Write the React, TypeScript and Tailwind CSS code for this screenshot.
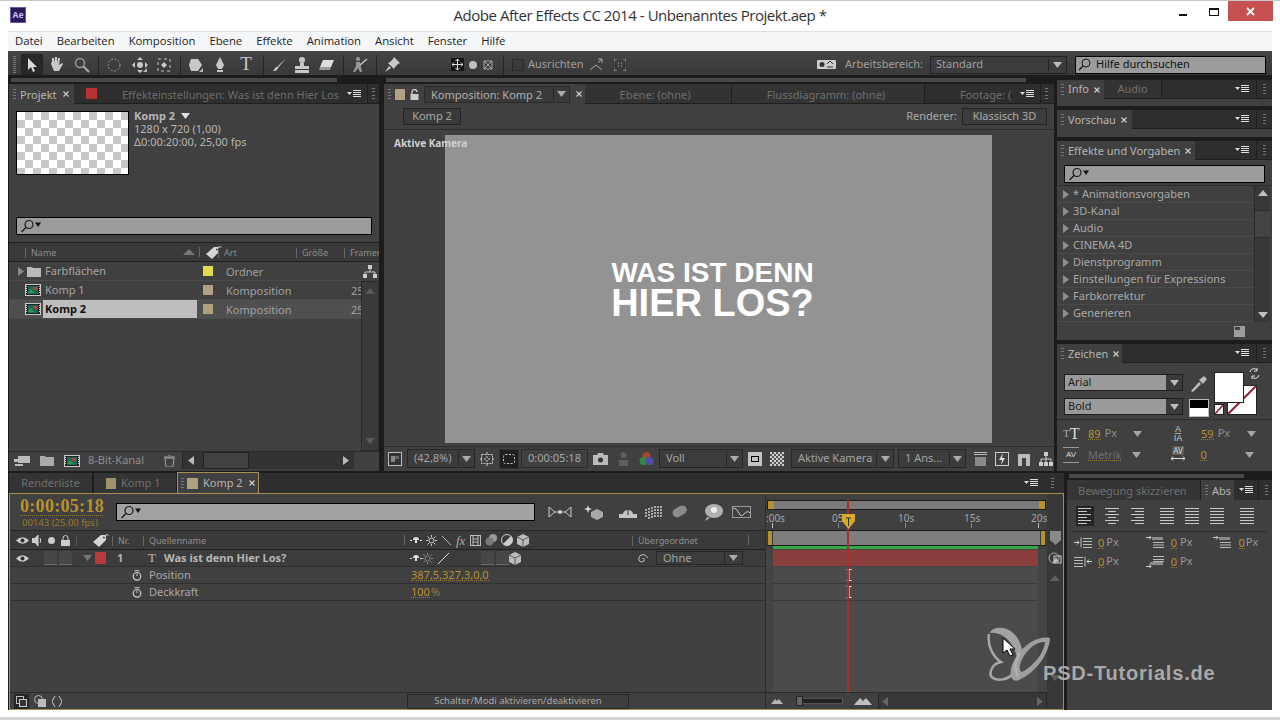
import React from "react";

type P = { children?: React.ReactNode; className?: string };

const Svg = ({ w = 16, h = 16, children, className = "" }: { w?: number; h?: number; children: React.ReactNode; className?: string }) => (
  <svg width={w} height={h} viewBox={`0 0 ${w} ${h}`} className={"shrink-0 " + className} fill="none">{children}</svg>
);

const Grip = ({ className = "" }: P) => (
  <div className={"w-[3px] h-[11px] shrink-0 flex flex-col justify-between " + className}>
    {[0, 1, 2, 3].map((i) => <div key={i} className="h-px bg-[#777]" />)}
  </div>
);

const PanelMenu = ({ className = "" }: P) => (
  <Svg w={15} h={8} className={className}>
    <path d="M0 2h5L2.5 5z" fill="#ddd" />
    <path d="M6 .5h8M6 2.5h8M6 4.5h8M6 6.5h8" stroke="#ddd" />
  </Svg>
);

const Close = ({ className = "" }: P) => (
  <Svg w={8} h={8} className={className}><path d="M1.5 1.5l5 5M6.5 1.5l-5 5" stroke="#cfcfcf" strokeWidth="1.1" /></Svg>
);

const Tri = ({ c = "#bdbdbd", className = "" }: { c?: string; className?: string }) => (
  <Svg w={9} h={6} className={className}><path d="M0 0h9L4.5 6z" fill={c} /></Svg>
);

const TriR = ({ c = "#8a8a8a", className = "" }: { c?: string; className?: string }) => (
  <Svg w={6} h={9} className={className}><path d="M0 0l6 4.5L0 9z" fill={c} /></Svg>
);

const Lens = () => (
  <Svg w={21} h={14} className="ml-[3px]">
    <circle cx="9" cy="5.5" r="4" stroke="#1c1c1c" strokeWidth="1.2" />
    <path d="M6 8.5L1.5 13" stroke="#1c1c1c" strokeWidth="1.4" />
    <path d="M15 3.5h6l-3 4.5z" fill="#111" />
  </Svg>
);

const Search = ({ className = "" }: P) => (
  <div className={"bg-[#9b9b9b] border border-black flex items-center " + className}><Lens /></div>
);

const Strip = ({ className = "" }: P) => (
  <div className="h-[8px] shrink-0 bg-[#1c1c1c] flex items-center pl-[2px]">
    <div className={"h-[4px] bg-[#484848] " + className} />
  </div>
);

const Sep = () => <div className="w-px h-[20px] bg-[#262626] shrink-0" />;
const Slot = ({ children, className = "" }: P) => <div className={"flex justify-center items-center shrink-0 " + className}>{children}</div>;
const Corner = () => <path d="M11 15h4v-4z" fill="#bbb" />;

const Drop = ({ label, className = "", btn = "w-[16px]" }: { label: string; className?: string; btn?: string }) => (
  <div className={"h-[19px] bg-[#3c3c3c] border border-[#272727] flex items-center shrink-0 " + className}>
    <span className="flex-1 pl-[6px] text-[#a3a3a3] whitespace-nowrap overflow-hidden">{label}</span>
    <div className={"h-[14px] border-l border-[#262626] flex items-center justify-center shrink-0 " + btn}><Tri c="#aaa" /></div>
  </div>
);

const FilmIcon = () => (
  <Svg w={16} h={12}>
    <rect x=".5" y=".5" width="15" height="11" fill="#222" stroke="#c8c8c8" />
    <rect x="3" y="2" width="10" height="8" fill="#1e6a5a" />
    <rect x="8" y="3" width="4" height="3" fill="#a04a30" />
    <path d="M3 9l3-4 3 4z" fill="#2f9a4e" />
    <path d="M1.5 2v8M14.5 2v8" stroke="#ddd" strokeDasharray="1 1" />
  </Svg>
);

const Folder = ({ c = "#b9b9b9" }: { c?: string }) => (
  <Svg w={14} h={11}><path d="M0 2V1h5l1 1h8v9H0z" fill={c} /></Svg>
);

const Tag = () => (
  <Svg w={17} h={15}>
    <path d="M1 9L9 2h5v5l-7 7z" fill="#d6d6d6" />
    <circle cx="12" cy="4.5" r="1" fill="#333" />
    <path d="M12 4C14 1 16 1 16 3" stroke="#d6d6d6" />
  </Svg>
);

const ColHead = ({ children, className = "" }: P) => (
  <div className={"flex items-center h-full shrink-0 whitespace-nowrap overflow-hidden " + className}>
    <div className="w-px h-[10px] bg-[#666] mr-[5px] shrink-0" />
    {children}
  </div>
);

const ProjRow = ({ icon, name, swatch, type, fr, sel }: { icon: React.ReactNode; name: string; swatch: string; type: string; fr?: string; sel?: boolean }) => (
  <div className={"h-[19px] flex items-center border-b border-[#4a4a4a] " + (sel ? "bg-[#4f4f4f]" : "")}>
    <div className="w-[34px] flex justify-end items-center pr-[2px] shrink-0">{icon}</div>
    <div className={"w-[154px] h-full pl-[2px] pt-px flex items-center shrink-0 " + (sel ? "bg-[#bebebe] text-[#111] font-bold" : "text-[#a5a5a5]")}>{name}</div>
    <div className="w-[6px] shrink-0" />
    <div className="w-[10px] h-[10px] shrink-0" style={{ background: swatch }} />
    <div className="w-[13px] shrink-0" />
    <div className="w-[125px] text-[#a0a0a0] shrink-0 mt-[2px]">{type}</div>
    <div className="text-[#a0a0a0] w-[10px] overflow-hidden mt-[2px]">{fr}</div>
  </div>
);

const InactiveTab = ({ children, className = "" }: P) => (
  <div className={"h-full bg-[#333] border-r border-[#1f1f1f] border-b border-b-[#1f1f1f] flex items-center justify-center text-[#6f6f6f] whitespace-nowrap overflow-hidden " + className}>{children}</div>
);

function ProjectPanel() {
  return (
    <div className="w-[370px] shrink-0 flex flex-col bg-[#404040] ml-px">
      <Strip className="w-[326px]" />
      <div className="h-[20px] flex items-center bg-[#2e2e2e] shrink-0">
        <div className="w-[65px] h-full bg-[#404040] flex items-center pl-[4px] text-[#b5b5b5] gap-[4px] shrink-0">
          <Grip /><span className="mt-[3px]">Projekt</span><Close className="ml-[1px]" />
        </div>
        <div className="flex-1 h-full flex items-center border-b border-[#1f1f1f] text-[#6d6d6d] overflow-hidden">
          <div className="w-[11px] h-[11px] bg-[#b93333] ml-[12px] shrink-0" />
          <span className="ml-[25px] whitespace-nowrap w-[218px] overflow-hidden shrink-0 mt-[3px]">Effekteinstellungen: Was ist denn Hier Los</span>
          <PanelMenu className="ml-[7px]" />
          <div className="w-px h-full bg-[#1f1f1f] ml-[5px]" />
          <Grip className="ml-[4px]" />
        </div>
      </div>
      <div className="h-[113px] pt-[7px] pl-[7px] flex shrink-0">
        <div className="w-[113px] h-[64px] border border-black shrink-0 bg-white bg-[repeating-conic-gradient(#c8c8c8_0_25%,#ffffff_0_50%)] bg-[length:16px_16px]" />
        <div className="ml-[5px] text-[#b5b5b5] leading-[13px] -mt-[2px]">
          <div className="font-bold flex items-center gap-[6px]">Komp 2 <Tri c="#e0e0e0" /></div>
          <div>1280 x 720 (1,00)</div>
          <div>Δ0:00:20:00, 25,00 fps</div>
        </div>
      </div>
      <Search className="h-[18px] w-[356px] ml-[7px] shrink-0" />
      <div className="h-[7px] shrink-0" />
      <div className="h-[20px] flex items-center bg-[#3a3a3a] border-y border-[#1f1f1f] text-[9px] text-[#8b8b8b] shrink-0">
        <ColHead className="w-[158px] ml-[16px] justify-start pt-[2px]">Name</ColHead>
        <Svg w={12} h={6}><path d="M0 6l6-6 6 6z" fill="#777" /></Svg>
        <div className="w-[4px] shrink-0" />
        <ColHead className="w-[19px] !overflow-visible"><Tag /></ColHead>
        <ColHead className="w-[78px] pt-[2px]">Art</ColHead>
        <ColHead className="w-[48px] pt-[2px]">Größe</ColHead>
        <ColHead className="flex-1 shrink pt-[2px]">Framer</ColHead>
      </div>
      <div className="flex-1 flex min-h-0">
        <div className="flex-1 min-w-0">
          <ProjRow icon={<div className="flex items-center gap-[3px]"><TriR /><Folder /></div>} name="Farbflächen" swatch="#e2d94e" type="Ordner" />
          <ProjRow icon={<FilmIcon />} name="Komp 1" swatch="#b0a17e" type="Komposition" fr="25" />
          <ProjRow icon={<FilmIcon />} name="Komp 2" swatch="#b0a17e" type="Komposition" fr="25" sel />
        </div>
        <div className="w-[18px] shrink-0 flex flex-col items-center">
          <Svg w={14} h={13} className="mt-[3px]"><path d="M5 0h4v4H5zM0 9h4v4H0zM10 9h4v4h-4z" fill="#ccc" /><path d="M7 4v3M2 9V7h10v2" stroke="#ccc" /></Svg>
          <div className="mt-[3px] flex-1 w-full bg-[#3a3a3a] border border-[#2a2a2a] flex flex-col justify-between items-center py-[6px]">
            <Svg w={10} h={6}><path d="M0 6l5-6 5 6z" fill="#5a5a5a" /></Svg>
            <Svg w={10} h={6}><path d="M0 0h10l-5 6z" fill="#5a5a5a" /></Svg>
          </div>
        </div>
      </div>
      <div className="h-[18px] mb-[2px] flex items-center shrink-0 text-[#8e8e8e] border-t border-[#2c2c2c] pl-[5px] pr-[1px]">
        <Svg w={16} h={12}><path d="M4 1h12v7H4zM0 4h10v3H0zM1 9h8v2H1z" fill="#bbb" /></Svg>
        <div className="ml-[10px]"><Folder c="#aaa" /></div>
        <div className="ml-[10px]"><FilmIcon /></div>
        <span className="ml-[8px] whitespace-nowrap w-[76px]">8-Bit-Kanal</span>
        <Svg w={11} h={12}><path d="M0 2h11M4 0h3M1 3l1 9h7l1-9z" stroke="#a5a5a5" /></Svg>
        <div className="ml-[7px] w-[172px] h-full bg-[#333] border-l border-[#262626] flex items-center">
          <TriR c="#bbb" className="rotate-180 ml-[5px]" />
          <div className="ml-[9px] w-[46px] h-full bg-[#424242] border border-[#222] shrink-0" />
          <TriR c="#bbb" className="ml-auto mr-[5px]" />
        </div>
      </div>
    </div>
  );
}

function CompPanel() {
  return (
    <div className="w-[670px] shrink-0 flex flex-col bg-[#404040] ml-[5px]">
      <Strip className="w-[640px]" />
      <div className="h-[20px] flex items-center bg-[#2e2e2e] shrink-0">
        <div className="w-[201px] h-full bg-[#404040] flex items-center pl-[4px] text-[#b0b0b0] shrink-0">
          <Grip />
          <div className="w-[10px] h-[11px] bg-[#b0a17e] ml-[4px]" />
          <Svg w={9} h={11} className="ml-[5px]"><path d="M2 5V3a2.5 2.5 0 0 1 5 0" stroke="#ccc" strokeWidth="1.3" /><rect x=".5" y="5" width="8" height="6" fill="#ccc" /></Svg>
          <div className="ml-[5px] w-[146px] h-[17px] bg-[#3a3a3a] border border-[#2a2a2a] flex items-center pl-[6px] shrink-0">
            <span className="flex-1 whitespace-nowrap mt-[2px]">Komposition: Komp 2</span>
            <div className="w-[16px] h-[12px] border-l border-[#222] flex items-center justify-center"><Tri c="#aaa" /></div>
          </div>
          <Close className="ml-[5px]" />
        </div>
        <InactiveTab className="w-[147px]"><span className="mt-[3px] mr-[6px]">Ebene: (ohne)</span></InactiveTab>
        <InactiveTab className="w-[193px]"><span className="mt-[3px] mr-[4px]">Flussdiagramm: (ohne)</span></InactiveTab>
        <div className="flex-1 h-full flex items-center border-b border-[#1f1f1f] text-[#6f6f6f] pl-[35px] whitespace-nowrap overflow-hidden">
          <span className="w-[56px] overflow-hidden shrink-0 mt-[3px]">Footage: (</span>
          <PanelMenu className="ml-[4px]" />
          <div className="w-px h-full bg-[#1f1f1f] ml-[5px] shrink-0" />
          <Grip className="ml-[4px]" />
        </div>
      </div>
      <div className="h-[26px] shrink-0 flex items-center border-b border-[#2c2c2c] pl-[19px] pr-[7px] text-[#a8a8a8]">
        <div className="w-[58px] h-[17px] bg-[#3a3a3a] border border-[#222] flex items-center justify-center">Komp 2</div>
        <span className="ml-auto">Renderer:</span>
        <div className="ml-[5px] w-[85px] h-[17px] bg-[#3c3c3c] border border-[#222] flex items-center justify-center">Klassisch 3D</div>
      </div>
      <div className="flex-1 min-h-0 relative flex justify-center pt-[5px] pb-[3px] pr-px">
        <span className="absolute left-[10px] top-[6px] text-[#d0d0d0] font-bold text-[10px]">Aktive Kamera</span>
        <div className="w-[547px] bg-[#939393] flex flex-col items-center justify-center text-white font-['Liberation_Sans',sans-serif] font-bold pb-[2px] pr-[12px]">
          <div className="text-[28px] leading-[30px]">WAS IST DENN</div>
          <div className="text-[38px] leading-[30px]">HIER LOS?</div>
        </div>
      </div>
      <div className="h-[24px] shrink-0 flex items-center pl-[4px] border-t border-[#2c2c2c] text-[#9a9a9a] mb-[1px]">
        <Svg w={14} h={14}><rect x=".5" y=".5" width="13" height="13" stroke="#bbb" fill="#333" /><rect x="3" y="4" width="4" height="6" fill="#888" /><rect x="7" y="4" width="4" height="3" fill="#666" /></Svg>
        <Drop label="(42,8%)" className="w-[68px] ml-[5px]" />
        <Svg w={14} h={14} className="ml-[5px]"><rect x="1.5" y="2.5" width="11" height="9" stroke="#ccc" strokeDasharray="2 1" /><path d="M7 0v14M0 7h14" stroke="#ccc" strokeDasharray="2 2" /></Svg>
        <div className="ml-[5px] w-[20px] h-[20px] bg-[#1f1f1f] border border-[#333] flex items-center justify-center shrink-0">
          <Svg w={14} h={12}><rect x="1.5" y="1.5" width="11" height="9" rx="2" stroke="#ccc" strokeDasharray="2 1.5" /></Svg>
        </div>
        <div className="ml-[2px] w-[67px] h-[19px] border border-[#2a2a2a] flex items-center justify-center shrink-0 text-[#a5a5a5]">0:00:05:18</div>
        <Svg w={15} h={12} className="ml-[5px]"><path d="M0 2h4l1-2h5l1 2h4v10H0z" fill="#bbb" /><circle cx="7.5" cy="7" r="2.5" fill="#333" /></Svg>
        <Svg w={11} h={14} className="ml-[10px]"><circle cx="5.5" cy="3" r="3" fill="#5e5e5e" /><path d="M1 14V8h9v6z" fill="#5e5e5e" /></Svg>
        <Svg w={15} h={16} className="ml-[10px]"><circle cx="7.5" cy="5" r="4" fill="#a5452f" /><circle cx="4.5" cy="10" r="4" fill="#2f8a45" /><circle cx="10.5" cy="10" r="4" fill="#4f4fa5" /></Svg>
        <Drop label="Voll" className="w-[84px] ml-[5px]" />
        <div className="ml-[5px] w-[14px] h-[14px] bg-[#c4c4c4] flex items-center justify-center shrink-0"><div className="w-[8px] h-[6px] border border-black" /></div>
        <div className="ml-[8px] w-[14px] h-[14px] shrink-0 bg-[repeating-conic-gradient(#555_0_25%,#cfcfcf_0_50%)] bg-[length:4px_4px]" />
        <Drop label="Aktive Kamera" className="w-[103px] ml-[7px]" btn="w-[17px]" />
        <Drop label="1 Ans..." className="w-[68px] ml-[4px]" />
        <Svg w={13} h={14} className="ml-[8px]"><path d="M0 .5h13M0 2.5h13" stroke="#bbb" /><path d="M1 5h11v9H1z" fill="#8a8a8a" /></Svg>
        <Svg w={14} h={14} className="ml-[8px]"><rect x=".5" y=".5" width="13" height="13" stroke="#ccc" /><path d="M8 1L4 8h3l-1 5 4-7H7z" fill="#ddd" /></Svg>
        <Svg w={14} h={14} className="ml-[8px]"><path d="M1 2h12v12h-4V6H5v8H1z" fill="#bbb" /></Svg>
        <Svg w={14} h={14} className="ml-[8px]"><path d="M5 0h4v4H5zM0 10h4v4H0zM10 10h4v4h-4zM5 10h4v4H5z" fill="#ccc" /><path d="M7 4v6M2 10V7h10v3" stroke="#ccc" /></Svg>
      </div>
    </div>
  );
}

const RightTabs = ({ children }: P) => (
  <div className="h-[19px] flex items-center bg-[#2e2e2e] shrink-0">
    {children}
    <div className="flex-1 h-full border-b border-[#1f1f1f] flex items-center justify-end">
      <PanelMenu className="mr-[6px]" />
      <div className="w-px h-full bg-[#1f1f1f]" />
      <Grip className="mx-[6px]" />
    </div>
  </div>
);

const ActiveTab = ({ children, className = "" }: P) => (
  <div className={"h-full bg-[#404040] flex items-center pl-[4px] gap-[4px] text-[#b5b5b5] shrink-0 " + className}><Grip />{children}</div>
);

const Num = ({ children, className = "" }: P) => (
  <span className={"text-[#b8912f] border-b border-dotted border-[#8f7a3a] leading-[11px] " + className}>{children}</span>
);

function RightCol() {
  const fx = ["* Animationsvorgaben", "3D-Kanal", "Audio", "CINEMA 4D", "Dienstprogramm", "Einstellungen für Expressions", "Farbkorrektur", "Generieren"];
  return (
    <div className="flex-1 min-w-0 flex flex-col gap-[4px] ml-[3px] pt-[4px]">
      <div className="h-[26px] bg-[#404040] flex flex-col shrink-0">
        <RightTabs>
          <ActiveTab className="w-[47px]"><span>Info</span><Close /></ActiveTab>
          <InactiveTab className="w-[58px]">Audio</InactiveTab>
        </RightTabs>
      </div>
      <div className="h-[27px] bg-[#404040] flex flex-col shrink-0">
        <RightTabs>
          <ActiveTab className="w-[75px]"><span className="mt-[2px]">Vorschau</span><Close /></ActiveTab>
        </RightTabs>
      </div>
      <div className="h-[199px] bg-[#404040] flex flex-col shrink-0">
        <RightTabs>
          <ActiveTab className="w-[138px]"><span className="whitespace-nowrap mt-[2px]">Effekte und Vorgaben</span><Close /></ActiveTab>
        </RightTabs>
        <Search className="h-[18px] w-[201px] ml-[7px] mt-[5px] shrink-0" />
        <div className="h-[3px] shrink-0 border-b border-[#2c2c2c]" />
        <div className="flex flex-1 min-h-0">
          <div className="flex-1 text-[#a8a8a8]">
            {fx.map((t) => (
              <div key={t} className="h-[17px] flex items-center pl-[6px] gap-[3px] border-b border-[#4a4a4a] whitespace-nowrap overflow-hidden">
                <TriR c="#8f8f8f" /><span className="ml-[1px]">{t}</span>
              </div>
            ))}
          </div>
          <div className="w-[16px] h-[136px] shrink-0 bg-[#383838] border-l border-[#2a2a2a] flex flex-col items-center justify-between py-[4px] mr-[2px]">
            <Svg w={10} h={6}><path d="M0 6l5-6 5 6z" fill="#c0c0c0" /></Svg>
            <div className="w-full h-[28px] bg-[#444] border-y border-[#2a2a2a] -mt-[60px]" />
            <Svg w={10} h={6}><path d="M0 0h10l-5 6z" fill="#c0c0c0" /></Svg>
          </div>
        </div>
        <div className="h-[17px] shrink-0 flex items-center justify-end pr-[27px]">
          <Svg w={11} h={11}><path d="M0 0h11v11H0z" fill="#9d9d9d" /><path d="M1 1h5v3H1z" fill="#444" /></Svg>
        </div>
      </div>
      <div className="flex-1 min-h-0 bg-[#404040] flex flex-col">
        <RightTabs>
          <ActiveTab className="w-[65px]"><span className="mt-[2px]">Zeichen</span><Close /></ActiveTab>
        </RightTabs>
        <div className="relative h-[57px] border-b border-[#2c2c2c] shrink-0 pl-[7px] flex">
          <div className="flex flex-col gap-[7px] pt-[11px] text-[#1d1d1d]">
            {["Arial", "Bold"].map((t) => (
              <div key={t} className="w-[119px] h-[17px] border border-[#1f1f1f] bg-[#3a3a3a] flex items-center">
                <div className="w-[101px] h-full bg-[#9a9a9a] pl-[3px] flex items-center">{t}</div>
                <div className="flex-1 flex justify-center"><Tri c="#bbb" /></div>
              </div>
            ))}
          </div>
          <div className="flex flex-col ml-[6px] pt-[12px] w-[20px] items-center shrink-0">
            <Svg w={18} h={17}><path d="M1 16l8-9 2 2-8 8zM9 5l5-4 3 3-4 5z" fill="#bcbcbc" /></Svg>
            <div className="mt-[7px] w-[20px] h-[18px] border border-[#bbb] flex flex-col"><div className="h-1/2 bg-black" /><div className="h-1/2 bg-white" /></div>
          </div>
          <Svg w={44} h={44} className="ml-[5px] mt-[9px]">
            <rect x="13.5" y="13.5" width="29" height="29" fill="#fff" stroke="#222" />
            <path d="M14 42L42 14" stroke="#8a1f2f" strokeWidth="2" />
            <rect x="20" y="20" width="9" height="11" fill="#444" />
            <rect x=".5" y=".5" width="29" height="30" fill="#fff" stroke="#222" />
            <rect x=".5" y="32.5" width="9" height="10" fill="#eee" stroke="#222" />
            <path d="M1 42L9 33" stroke="#8a1f2f" strokeWidth="1.5" />
          </Svg>
          <Svg w={11} h={11} className="absolute left-[192px] top-[5px]"><path d="M1 4a4 4 0 0 1 7-2M10 7a4 4 0 0 1-7 2M8 0v3H5M3 11V8h3" stroke="#ddd" /></Svg>
        </div>
        <div className="flex flex-col gap-[4px] pt-[5px] text-[#8f8f8f]">
          <div className="flex items-center h-[17px] pl-[6px]">
            <div className="w-[16px] h-[17px] flex items-end shrink-0 font-['Liberation_Serif',serif] text-[#ddd] leading-[17px]"><span className="text-[11px] text-[#aaa]">T</span><span className="text-[16px]">T</span></div>
            <Num className="ml-[9px]">89</Num><span className="ml-[4px]">Px</span>
            <Tri c="#a5a5a5" className="ml-[16px]" />
            <div className="ml-[29px] w-[14px] h-[18px] flex flex-col items-center shrink-0 text-[9px] leading-[9px] text-[#ccc] font-['Liberation_Sans',sans-serif]"><span className="border-b border-[#aaa] leading-[8px]">A</span><span>IA</span></div>
            <Num className="ml-[16px]">59</Num><span className="ml-[4px]">Px</span>
            <Tri c="#a5a5a5" className="ml-[17px]" />
          </div>
          <div className="flex items-center h-[17px] pl-[6px]">
            <div className="w-[16px] h-[16px] flex flex-col items-center shrink-0 text-[8px] leading-[16px] text-[#ddd] font-['Liberation_Sans',sans-serif] border-y border-[#999]"><span className="leading-[14px]">AV</span></div>
            <Num className="ml-[9px] !text-[#6e6e6e]">Metrik</Num>
            <Tri c="#a5a5a5" className="ml-[11px]" />
            <div className="ml-[29px] w-[15px] h-[17px] flex flex-col items-center shrink-0 text-[8px] leading-[9px] text-[#ddd]"><span className="bg-[#5a5a5a] px-[1px]">AV</span><Svg w={14} h={5} className="mt-[1px]"><path d="M0 2.5h14M2 .5L0 2.5l2 2M12 .5l2 2-2 2" stroke="#ddd" /></Svg></div>
            <Num className="ml-[15px]">0</Num>
            <Tri c="#a5a5a5" className="ml-[38px]" />
          </div>
        </div>
      </div>
    </div>
  );
}

const Eye = () => (
  <Svg w={13} h={9}><path d="M0 4.5Q6.5-2 13 4.5 6.5 11 0 4.5z" fill="#ccc" /><circle cx="6.5" cy="4.5" r="2" fill="#333" /></Svg>
);
const Cube = () => (
  <Svg w={12} h={13}><path d="M6 0l6 3v7l-6 3-6-3V3z" fill="#bcbcbc" /><path d="M0 3l6 3 6-3M6 6v7" stroke="#555" /></Svg>
);
const Stopwatch = () => (
  <Svg w={10} h={11}><circle cx="5" cy="6.3" r="3.8" stroke="#ccc" strokeWidth="1.2" /><path d="M2.5 .7h5M5 6V3.5" stroke="#ccc" /></Svg>
);
const Shy = () => (
  <Svg w={12} h={7}><path d="M0 3.5h2M10 3.5h2" stroke="#ddd" /><path d="M3 3a3 3 0 0 1 6 0H7v3H5V3z" fill="#ddd" /></Svg>
);
const Sun = ({ c = "#ccc" }: { c?: string }) => (
  <Svg w={11} h={11}><circle cx="5.5" cy="5.5" r="2.5" stroke={c} /><path d="M5.5 0v2M5.5 9v2M0 5.5h2M9 5.5h2M1.5 1.5l1.5 1.5M8 8l1.5 1.5M9.5 1.5L8 3M3 8L1.5 9.5" stroke={c} /></Svg>
);
const Box = () => <div className="w-[13px] h-[14px] border-b border-[#6a6a6a] bg-[#474747] shrink-0" />;

function TimelineLeft() {
  return (
    <div className="w-[755px] shrink-0 flex flex-col h-full">
      <div className="h-[37px] shrink-0 flex items-center pl-[10px] border-b border-[#272727]">
        <div className="w-[96px] shrink-0 flex flex-col mt-[2px]">
          <div className="font-['Liberation_Serif',serif] font-bold text-[18px] leading-[18px] text-[#b8912f] border-b border-dotted border-[#8f7a3a] w-[83px] tracking-[0.3px]">0:00:05:18</div>
          <div className="text-[#98792a] text-[9.5px] leading-[13px] ml-[2px]">00143 (25.00 fps)</div>
        </div>
        <Search className="w-[419px] h-[18px] !bg-[#a2a2a2] -mt-[1px]" />
        <Svg w={24} h={12} className="ml-[13px]"><path d="M1 1l6 5-6 5zM23 1l-6 5 6 5z" stroke="#ccc" /><path d="M7 6h10" stroke="#ccc" /><circle cx="12" cy="6" r="2" fill="#ccc" /></Svg>
        <Svg w={19} h={15} className="ml-[12px]"><path d="M4 0l1 3 3 1-3 1-1 3-1-3-3-1 3-1z" fill="#ddd" /><path d="M13 4l6 3v5l-6 3-6-3V7z" fill="#a8a8a8" /></Svg>
        <Svg w={18} h={12} className="ml-[16px]"><path d="M0 12V8h4a5 4 0 1 1 10 0h4v4z" fill="#c4c4c4" /><path d="M9 4v5" stroke="#333" /></Svg>
        <Svg w={18} h={15} className="ml-[8px]"><path d="M1 4v9M4 3v11M7 2v12M10 1v12M13 1v12M16 1v11" stroke="#aaa" strokeWidth="2" strokeDasharray="2 1" /></Svg>
        <Svg w={17} h={15} className="ml-[8px]"><rect x="2" y="2" width="15" height="9" rx="4.5" transform="rotate(-30 9 8)" fill="#8a8a8a" /></Svg>
        <Svg w={19} h={17} className="ml-[16px]"><ellipse cx="10" cy="7" rx="9" ry="7" fill="#b0b0b0" /><circle cx="10" cy="6" r="3" fill="#eee" /><path d="M3 13l-2 4 5-3z" fill="#b0b0b0" /></Svg>
        <Svg w={19} h={14} className="ml-[9px]"><rect x=".5" y="1.5" width="18" height="11" stroke="#999" /><path d="M1 3q4 0 6 5t5 1 6-1" stroke="#ccc" /></Svg>
      </div>
      <div className="h-[19px] shrink-0 flex items-center border-b border-[#1f1f1f] bg-[#3a3a3a] text-[9px] text-[#8d8d8d]">
        <div className="flex items-center w-[68px] pl-[6px] shrink-0 gap-[3px]">
          <Eye />
          <Svg w={10} h={11}><path d="M0 3.5h3L6 0v11L3 7.5H0zM8 3q1.5 2.5 0 5" fill="#ccc" stroke="#ccc" /></Svg>
          <div className="w-[7px] h-[7px] rounded-full bg-[#ccc] ml-[3px] shrink-0" />
          <Svg w={9} h={11} className="ml-[3px]"><path d="M2 5V3a2.5 2.5 0 0 1 5 0v2" stroke="#ccc" /><rect y="5" width="9" height="6" fill="#ccc" /></Svg>
          <div className="w-px h-[11px] bg-[#555] ml-[3px] shrink-0" />
        </div>
        <div className="ml-[14px]"><Tag /></div>
        <ColHead className="w-[31px] ml-[3px] pt-[2px]">Nr.</ColHead>
        <ColHead className="w-[261px] pt-[2px]">Quellenname</ColHead>
        <ColHead className="w-[228px]">
          <div className="flex gap-[4px] items-center">
            <Shy /><Sun />
            <Svg w={11} h={11}><path d="M1 1l9 9" stroke="#bbb" /></Svg>
            <span className="font-['Liberation_Serif',serif] italic text-[13px] text-[#aaa] leading-none w-[10px]">fx</span>
            <Svg w={11} h={11}><rect x=".5" y=".5" width="10" height="10" stroke="#bbb" /><path d="M3 1v9M8 1v9M3 4h5M3 7h5" stroke="#bbb" /></Svg>
            <Svg w={12} h={12}><circle cx="8" cy="4" r="4" fill="#999" /><circle cx="4.5" cy="7.5" r="4" fill="#777" /></Svg>
            <Svg w={12} h={12}><circle cx="6" cy="6" r="5.5" stroke="#ccc" /><path d="M10 2a5.5 5.5 0 0 1-8 8z" fill="#ccc" /></Svg>
            <Cube />
          </div>
        </ColHead>
        <ColHead className="w-[116px] pt-[2px]">Übergeordnet</ColHead>
        <div className="w-px h-[10px] bg-[#666]" />
      </div>
      <div className="h-[17px] shrink-0 flex items-center border-b border-[#2f2f2f] bg-[#3c3c3c] font-bold text-[#b5b5b5]">
        <div className="w-[34px] pl-[6px] shrink-0"><Eye /></div>
        <div className="flex gap-[2px] w-[39px] shrink-0"><Box /><Box /></div>
        <Tri c="#777" />
        <div className="w-[11px] h-[12px] bg-[#b83a3a] ml-[3px] shrink-0" />
        <span className="ml-[11px] w-[31px] shrink-0">1</span>
        <span className="font-['Liberation_Serif',serif] font-normal text-[#bbb] text-[13px] w-[16px] shrink-0">T</span>
        <span className="w-[246px] shrink-0 whitespace-nowrap">Was ist denn Hier Los?</span>
        <div className="flex items-center w-[227px] shrink-0">
          <Shy /><Sun c="#888" />
          <Svg w={13} h={13} className="ml-[4px]"><path d="M1 12L12 1" stroke="#ddd" /></Svg>
          <div className="ml-[31px] flex gap-[2px]"><Box /><Box /></div>
          <Cube />
        </div>
        <Svg w={11} h={11}><path d="M5.5 5.5a1.5 1.5 0 0 1 2 1.5 3 3 0 0 1-5 1 4 4 0 0 1 2-6 4.5 4.5 0 0 1 6 3" stroke="#ccc" /></Svg>
        <Drop label="Ohne" className="w-[87px] !h-[14px] ml-[8px] font-normal" btn="w-[18px]" />
      </div>
      {[["Position", "387,5,327,3,0,0"], ["Deckkraft", "100"]].map(([n, v]) => (
        <div key={n} className="h-[17px] shrink-0 flex items-center border-b border-[#2f2f2f] text-[#a8a8a8]">
          <div className="w-[132px] shrink-0 flex justify-end"><Stopwatch /></div>
          <span className="ml-[7px] w-[262px] shrink-0">{n}</span>
          <Num>{v}</Num>{n === "Deckkraft" && <span className="text-[#8d7c45] ml-[1px]">%</span>}
        </div>
      ))}
      <div className="flex-1 min-h-0" />
      <div className="h-[17px] shrink-0 flex items-center border-t border-[#2a2a2a] pl-[4px] text-[#bdbdbd] text-[10px]">
        <div className="w-[15px] h-[15px] bg-[#262626] flex items-center justify-center shrink-0"><Svg w={11} h={11}><rect x=".5" y=".5" width="7" height="7" stroke="#bbb" /><rect x="3.5" y="3.5" width="7" height="7" stroke="#ccc" fill="#333" /></Svg></div>
        <Svg w={12} h={12} className="ml-[5px]"><circle cx="4.5" cy="4.5" r="4" stroke="#bbb" /><rect x="4" y="4" width="8" height="8" fill="#bbb" /></Svg>
        <Svg w={10} h={11} className="ml-[6px]"><path d="M3 0L0 5.5 3 11M7 0l3 5.5L7 11" stroke="#ccc" /></Svg>
        <div className="ml-[345px] w-[222px] h-[15px] bg-[#3e3e3e] border border-[#262626] flex items-center justify-center text-[#a8a8a8] text-[9.5px] shrink-0 whitespace-nowrap">Schalter/Modi aktivieren/deaktivieren</div>
      </div>
    </div>
  );
}

const TickLabel = ({ x, t }: { x: string; t: string }) => <span className={"absolute top-[18px] text-[10px] leading-[12px] text-[#a5a5a5] " + x}>{t}</span>;
const KF = () => (
  <Svg w={7} h={12}><path d="M.5.5h5M.5 11.5h5M3 .5v11" stroke="#e5e5e5" /></Svg>
);

function TimelineGraph() {
  return (
    <div className="w-[282px] shrink-0 flex flex-col h-full border-l border-[#2c2c2c] relative">
      <div className="h-[36px] shrink-0 relative overflow-hidden">
        <div className="mt-[6px] h-[10px] mx-[1px] bg-[#7a7a7a] border border-[#1c1c1c] flex justify-between">
          <div className="w-[6px] bg-[#b8912f]" /><div className="w-[6px] bg-[#b8912f]" />
        </div>
        <TickLabel x="left-0" t=":00s" />
        <TickLabel x="left-[66px]" t="05s" />
        <TickLabel x="left-[132px]" t="10s" />
        <TickLabel x="left-[198px]" t="15s" />
        <TickLabel x="left-[265px]" t="20s" />
        <div className="absolute left-[6px] bottom-[2px] w-px h-[5px] bg-[#bbb]" />
        <div className="absolute left-[72px] bottom-[2px] w-px h-[5px] bg-[#888]" />
        <div className="absolute left-[139px] bottom-[2px] w-px h-[5px] bg-[#888]" />
        <div className="absolute left-[205px] bottom-[2px] w-px h-[5px] bg-[#888]" />
        <div className="absolute left-[272px] bottom-[2px] w-px h-[5px] bg-[#bbb]" />
      </div>
      <div className="h-[16px] shrink-0 bg-[#7e7e7e] border-y border-[#1c1c1c] flex justify-between mx-[1px]">
        <div className="w-[6px] bg-[#b8912f] border-x border-[#3a3a3a]" /><div className="w-[6px] bg-[#b8912f] border-x border-[#3a3a3a]" />
      </div>
      <div className="h-[3px] shrink-0 bg-[#35a747] ml-[7px] mr-[9px]" />
      <div className="flex-1 min-h-0 flex flex-col bg-[#444] px-[7px] pr-[8px] pt-px">
        <div className="bg-[#4b4b4b] flex-1 flex flex-col mr-[1px]">
          <div className="h-[17px] shrink-0 bg-[#8a3e3e] border-b border-[#444]" />
          <div className="h-[17px] shrink-0 border-b border-[#3a3a3a] flex items-center pl-[73px]"><KF /></div>
          <div className="h-[17px] shrink-0 border-b border-[#3a3a3a] flex items-center pl-[73px]"><KF /></div>
        </div>
      </div>
      <div className="h-[17px] shrink-0 flex items-center border-t border-[#2a2a2a]">
        <Svg w={12} h={6} className="ml-[5px]"><path d="M0 6l4-5 2 2 2-2 4 5z" fill="#b5b5b5" /></Svg>
        <div className="ml-[14px] flex items-center relative w-[46px] h-[6px] bg-[#222] border border-[#555] shrink-0">
          <div className="absolute -left-[2px] -top-[3px] w-[7px] h-[10px] bg-[#666] border border-[#222]" />
        </div>
        <Svg w={18} h={8} className="ml-[11px]"><path d="M0 8l6-7 3 3 3-3 6 7z" fill="#c0c0c0" /></Svg>
        <div className="ml-[6px] flex-1 h-full bg-[#383838] border-x border-[#262626] flex items-center justify-between px-[3px]">
          <TriR c="#666" className="rotate-180" /><TriR c="#666" />
        </div>
      </div>
      <div className="absolute left-[81px] top-[6px] bottom-[17px] w-[2px] bg-[#a82f2f]" />
      <Svg w={13} h={16} className="absolute left-[76px] top-[20px]"><path d="M0 0h13v7L6.5 15 0 7z" fill="#d9a92a" /><path d="M6.5 4v8M4 4h5" stroke="#333" /></Svg>
    </div>
  );
}

function Timeline() {
  return (
    <div className="w-[1055px] shrink-0 flex flex-col ml-px">
      <div className="h-[22px] flex items-end shrink-0 bg-[#1c1c1c] text-[#707070]">
        <div className="w-[84px] h-[20px] bg-[#343434] flex items-center justify-center border-r border-[#1c1c1c]">Renderliste</div>
        <div className="w-[83px] h-[20px] bg-[#343434] flex items-center pl-[12px] gap-[5px] border-r border-[#1c1c1c] ml-px">
          <div className="w-[10px] h-[11px] bg-[#a0926f]" />Komp 1
        </div>
        <div className="w-[82px] h-[21px] bg-[#404040] border border-b-0 border-[#a88f4f] flex items-center pl-[3px] gap-[3px] text-[#b5b5b5]">
          <Grip /><div className="w-[11px] h-[11px] bg-[#b0a17e]" /><span className="ml-[2px]">Komp 2</span><Close className="ml-[2px]" />
        </div>
        <div className="flex-1 h-[20px] bg-[#2e2e2e] flex items-center justify-end pr-[10px]"><PanelMenu /><Grip className="ml-[12px]" /></div>
      </div>
      <div className="flex-1 min-h-0 bg-[#404040] border border-[#a88f4f] flex text-[#b5b5b5]">
        <TimelineLeft />
        <TimelineGraph />
        <div className="flex-1 min-w-0 flex flex-col items-center bg-[#383838]">
          <Svg w={11} h={14} className="mt-[37px]"><path d="M0 0h11v9l-5.5 5L0 9z" fill="#8a8a8a" /></Svg>
          <Svg w={14} h={13} className="mt-[7px]"><path d="M5 10L8 5l3 5z" fill="#bbb" /><circle cx="6" cy="6" r="5" stroke="#aaa" /><rect x="6" y="4" width="7" height="7" stroke="#ccc" /></Svg>
          <Svg w={10} h={6} className="mt-[10px]"><path d="M0 6l5-6 5 6z" fill="#5f5f5f" /></Svg>
          <Svg w={10} h={6} className="mt-[94px]"><path d="M0 0h10l-5 6z" fill="#5f5f5f" /></Svg>
        </div>
      </div>
    </div>
  );
}

const AlignIcon = ({ mode = "j", sel }: { mode?: string; sel?: boolean }) => {
  const ys = [1, 4, 7, 10, 13, 16];
  const xs = (i: number) => {
    if (mode === "l") return [0, i % 2 ? 9 : 13];
    if (mode === "c") return [i % 2 ? 3 : 0, i % 2 ? 11 : 14];
    if (mode === "r") return [i % 2 ? 5 : 1, 14];
    return [0, 14];
  };
  return (
    <div className={"w-[18px] h-[20px] flex items-center justify-center shrink-0 " + (sel ? "bg-[#262626] border border-[#222]" : "")}>
      <Svg w={14} h={17}>{ys.map((y, i) => <path key={y} d={`M${xs(i)[0]} ${y}.5H${xs(i)[1]}`} stroke="#c8c8c8" />)}</Svg>
    </div>
  );
};

const ParaIcon = ({ flip }: { flip?: boolean }) => (
  <Svg w={18} h={11} className={flip ? "-scale-x-100" : ""}>
    <path d="M0 5.5h5M3 3.5l2 2-2 2" stroke="#ccc" />
    <path d="M7 .5v10M9 1.5h9M9 4.5h9M9 7.5h9M9 10.5h9" stroke="#bbb" />
  </Svg>
);

const ParaTop = ({ up }: { up?: boolean }) => (
  <Svg w={18} h={13}>
    <path d={up ? "M0 11.5h5M3 9.5l2 2-2 2" : "M0 1.5h5M3 -.5l2 2-2 2"} stroke="#ccc" />
    <path d={up ? "M4 8.5h13" : "M6 2.5h11"} stroke="#8a8a8a" strokeWidth="3" />
    <path d={up ? "M7 1.5h11M7 4.5h11M7 6.5h11" : "M7 6.5h11M7 9h11M7 11.5h11"} stroke="#bbb" />
  </Svg>
);

function MotionPanel() {
  return (
    <div className="flex-1 min-w-0 ml-[3px] flex flex-col">
      <div className="h-[9px] shrink-0 flex items-center pl-[2px] bg-[#1c1c1c]"><div className="w-[175px] h-[4px] bg-[#484848]" /></div>
      <div className="flex-1 bg-[#404040] flex flex-col min-h-0">
        <div className="h-[20px] shrink-0 flex items-center bg-[#2e2e2e]">
          <div className="w-[134px] h-full bg-[#353535] border-r border-[#1f1f1f] flex items-center pl-[11px] text-[#6f6f6f] whitespace-nowrap"><span className="mt-[2px]">Bewegung skizzieren</span></div>
          <ActiveTab className="w-[33px] overflow-hidden"><span className="mt-[2px]">Abs</span></ActiveTab>
          <PanelMenu className="ml-[5px]" />
          <div className="w-px h-full bg-[#1f1f1f] ml-[4px]" />
          <Grip className="ml-[6px]" />
        </div>
        <div className="h-[32px] mx-[5px] flex items-center border-b border-[#2f2f2f] shrink-0 pl-[4px]">
          <AlignIcon mode="l" sel />
          <div className="ml-[9px]"><AlignIcon mode="c" /></div>
          <div className="ml-[7px]"><AlignIcon mode="r" /></div>
          <div className="ml-[12px]"><AlignIcon /></div>
          <div className="ml-[7px]"><AlignIcon /></div>
          <div className="ml-[7px]"><AlignIcon /></div>
          <div className="ml-[12px]"><AlignIcon /></div>
        </div>
        <div className="pl-[7px] pt-[1px] text-[#999]">
          <div className="flex items-center h-[19px]">
            <ParaIcon /><Num className="ml-[6px]">0</Num><span className="ml-[2px]">Px</span>
            <div className="ml-[27px]"><ParaTop /></div><Num className="ml-[7px]">0</Num><span className="ml-[3px]">Px</span>
            <div className="ml-[20px]"><ParaTop /></div><Num className="ml-[8px]">0</Num><span className="ml-[1px]">Px</span>
          </div>
          <div className="flex items-center h-[19px]">
            <ParaIcon flip /><Num className="ml-[6px]">0</Num><span className="ml-[2px]">Px</span>
            <div className="ml-[27px]"><ParaTop up /></div><Num className="ml-[7px]">0</Num><span className="ml-[3px]">Px</span>
          </div>
        </div>
      </div>
    </div>
  );
}

function Toolbar() {
  const c = "#c8c8c8";
  return (
    <div className="h-[25px] shrink-0 bg-gradient-to-b from-[#454545] to-[#383838] border-b border-[#1c1c1c] flex items-center text-[#9f9f9f] pl-[5px] pt-[3px]">
      <div className="w-[3px] h-[18px] bg-[repeating-linear-gradient(#777_0_1px,transparent_1px_2px)] shrink-0" />
      <div className="w-[22px] h-[21px] ml-[5px] bg-[#282828] border border-[#222] flex items-center justify-center shrink-0">
        <Svg w={10} h={14}><path d="M1 0v12l3-3 2 5 2-1-2-4h4z" fill="#ddd" /></Svg>
      </div>
      <Slot className="w-[26px]"><Svg w={15} h={15}><path d="M2 7V4l1 3V1l2 0 1 5V0h2l0 6 1-5h2l-1 7 3-2 1 1-4 7H5z" fill={c} /></Svg></Slot>
      <Slot className="w-[26px]"><Svg w={16} h={16}><circle cx="6" cy="6" r="4.5" stroke="#999" strokeWidth="1.5" /><path d="M9.5 9.5L15 15" stroke="#aaa" strokeWidth="2" /></Svg></Slot>
      <div className="w-[3px] shrink-0" /><Sep />
      <Slot className="w-[30px]"><Svg w={14} h={14}><circle cx="7" cy="7" r="6" stroke="#999" strokeDasharray="2 1.5" /></Svg></Slot>
      <Slot className="w-[22px]"><Svg w={16} h={16}><path d="M8 0l3 3H5zM8 16l-3-3h6zM0 8l3-3v6zM16 8l-3 3V5z" fill={c} /><circle cx="8" cy="8" r="3" fill={c} /><Corner /></Svg></Slot>
      <Slot className="w-[26px]"><Svg w={16} h={14}><path d="M2 1h12v12H2z" stroke={c} strokeDasharray="3 3" /><path d="M5 7l3-3 3 3-3 3z" fill={c} /></Svg></Slot>
      <div className="w-[3px] shrink-0" /><Sep />
      <Slot className="w-[30px]"><Svg w={16} h={16}><path d="M3 2h7l4 6-4 6H3l-2-6z" fill={c} /><Corner /></Svg></Slot>
      <Slot className="w-[18px]"><Svg w={14} h={16}><path d="M7 0l4 8-2 4H5L3 8z" fill={c} /><path d="M4 13h6v2H4z" fill={c} /></Svg></Slot>
      <Slot className="w-[34px] font-['Liberation_Serif',serif] text-[19px] text-[#c8c8c8]">T</Slot>
      <Sep />
      <Slot className="w-[30px]"><Svg w={14} h={14}><path d="M14 0L5 9l1 1zM5 9c-2 0-2 2-4 4 2 0 4 0 5-3z" fill={c} /></Svg></Slot>
      <Slot className="w-[16px]"><Svg w={14} h={16}><circle cx="7" cy="3" r="3" fill={c} /><path d="M5 6h4v3h5v3H0V9h5zM0 13h14v3H0z" fill={c} /></Svg></Slot>
      <Slot className="w-[33px]"><Svg w={15} h={10}><path d="M4 0h11l-3 7H1z" fill="#ddd" /><path d="M1 7h11l-1 3H0z" fill="#999" /></Svg></Slot>
      <Sep />
      <Slot className="w-[32px]"><Svg w={16} h={16}><circle cx="6" cy="2" r="2" fill="#999" /><path d="M4 5h4l1 5 1 5H8L6 11l-3 4H1l3-6z" fill="#999" /><path d="M8 8L15 2" stroke={c} strokeWidth="1.5" /></Svg></Slot>
      <Sep />
      <Slot className="w-[30px]"><Svg w={15} h={15}><path d="M9 0l6 6-2 1-3 3-1 2-6-6 2-1 3-3zM4 9l-4 6 6-4z" fill={c} /></Svg></Slot>
      <div className="w-[44px] shrink-0" />
      <div className="w-[13px] h-[13px] bg-[#141414] flex items-center justify-center shrink-0"><Svg w={11} h={11}><path d="M5.5 0v11M0 5.5h11M3.5 2l2-2 2 2M3.5 9l2 2 2-2M2 3.5l-2 2 2 2M9 3.5l2 2-2 2" stroke="#ddd" /></Svg></div>
      <Slot className="w-[17px]"><div className="w-[8px] h-[8px] rounded-full bg-[#c0c0c0]" /></Slot>
      <Slot className="w-[14px]"><Svg w={10} h={10}><path d="M1 1h8v8H1z M1 1l8 8M9 1L1 9" stroke="#aaa" /></Svg></Slot>
      <div className="w-[8px] shrink-0" /><Sep />
      <div className="w-[12px] h-[12px] ml-[8px] bg-[#3a3a3a] border border-[#2a2a2a] shrink-0" />
      <span className="ml-[4px] whitespace-nowrap w-[56px] shrink-0">Ausrichten</span>
      <Svg w={13} h={13} className="ml-[6px]"><path d="M0 12L6 7l6 5M8 1h4v4M12 1L8 5" stroke="#aaa" /></Svg>
      <Svg w={12} h={12} className="ml-[11px]"><path d="M0 3V0h3M9 0h3v3M0 9v3h3M9 12h3V9" stroke="#aaa" /><path d="M4 4h1M7 4h1M4 7h1M7 7h1" stroke="#aaa" /></Svg>
      <Svg w={19} h={9} className="ml-auto"><rect width="19" height="9" rx="1" fill="#ccc" /><circle cx="5" cy="4.5" r="2.5" fill="#333" /><path d="M10 4l3-3 3 3M10 7h6" stroke="#333" /></Svg>
      <span className="ml-[9px] whitespace-nowrap">Arbeitsbereich:</span>
      <div className="ml-[7px] w-[137px] h-[18px] bg-[#3c3c3c] border border-[#232323] flex items-center shrink-0">
        <span className="flex-1 pl-[5px]">Standard</span>
        <div className="w-[18px] h-[12px] border-l border-[#222] flex items-center justify-center"><Tri c="#bbb" /></div>
      </div>
      <div className="ml-[8px] mr-[6px] w-[191px] h-[18px] bg-[#9b9b9b] border border-black flex items-center text-[#111] shrink-0">
        <Svg w={13} h={13} className="ml-[2px]"><circle cx="8" cy="5" r="4" stroke="#1c1c1c" /><path d="M5 8L1 12" stroke="#1c1c1c" strokeWidth="1.4" /></Svg>
        <span className="ml-[5px]">Hilfe durchsuchen</span>
      </div>
    </div>
  );
}

function Watermark() {
  return (
    <div className="absolute left-[987px] top-[624px] pointer-events-none">
      <div className="flex items-end">
        <svg width="70" height="60" viewBox="0 0 70 60" fill="none">
          <path d="M3 8C6-1 30 0 35 24L30 32C26 14 12 6 3 8z" fill="#a2a2a2" />
          <path d="M2 9C0 20 6 32 14 37 4 39 1 50 6 53c5 3 14 2 20-4" stroke="#a6a6a6" strokeWidth="2.5" />
          <path fillRule="evenodd" d="M63 13C50 10 32 22 25 40 21 52 26 58 32 55 48 48 62 30 63 13zM58 17C48 16 36 28 33 40 32 46 34 48 37 46 47 40 57 28 58 17z" fill="#9e9e9e" />
          <path d="M33 28c-5 7-6 15-2 24" stroke="#b0b0b0" strokeWidth="2.5" />
        </svg>
        <span className="font-['Liberation_Sans',sans-serif] font-bold text-[20px] leading-[20px] tracking-[0.8px] text-[#a8a8a8] -ml-[14px] mb-[2px]">PSD-Tutorials.de</span>
      </div>
      <svg width="14" height="20" viewBox="0 0 14 20" className="absolute left-[15px] top-[12px]">
        <path d="M1 1v15l4-3 3 6 3-1-3-6h5z" fill="#fff" stroke="#000" />
      </svg>
    </div>
  );
}

export default function App() {
  const menu = ["Datei", "Bearbeiten", "Komposition", "Ebene", "Effekte", "Animation", "Ansicht", "Fenster", "Hilfe"];
  return (
    <div className="w-[1280px] h-[720px] bg-white relative overflow-hidden flex flex-col font-['Noto_Sans',sans-serif] text-[11px] border-t border-[#c8c8c8]">
      <div className="h-[30px] shrink-0 flex items-center relative">
        <div className="w-[16px] h-[16px] ml-[10px] -mt-[2px] bg-[#2a1a5c] border border-[#6a5aa5] flex items-center justify-center text-[8.5px] font-bold text-[#c9b9f0]">Ae</div>
        <div className="absolute left-0 right-0 text-center text-[#333] text-[15px] tracking-[-0.03em] -mt-[2px] font-['Open_Sans',sans-serif]">Adobe After Effects CC 2014 - Unbenanntes Projekt.aep *</div>
        <div className="ml-auto flex items-start h-full mr-[7px]">
          <Svg w={9} h={3} className="mt-[12px] mr-[21px]"><rect width="8" height="2" y="1" fill="#111" /></Svg>
          <Svg w={11} h={9} className="mt-[7px] mr-[8px]"><rect x=".5" y=".5" width="9" height="7" stroke="#111" strokeWidth="1" /><path d="M0 1h10" stroke="#111" strokeWidth="2" /></Svg>
          <div className="w-[45px] h-[20px] bg-[#c75050] flex items-center justify-center">
            <Svg w={9} h={9}><path d="M1 1l7 7M8 1L1 8" stroke="#fff" strokeWidth="1.8" /></Svg>
          </div>
        </div>
      </div>
      <div className="mx-[8px] flex-1 min-h-0 flex flex-col">
        <div className="h-[20px] shrink-0 bg-[#f5f6f7] border-t border-[#e0e0e0] flex items-center pl-[7px] text-[#222] text-[11.3px] font-['Open_Sans',sans-serif]">
          {menu.map((m) => <span key={m} className="mr-[14px] whitespace-nowrap">{m}</span>)}
        </div>
        <Toolbar />
        <div className="h-[395px] shrink-0 flex bg-[#1c1c1c] text-[#b0b0b0]">
          <ProjectPanel />
          <CompPanel />
          <RightCol />
        </div>
        <div className="h-[239px] shrink-0 flex bg-[#1c1c1c]">
          <Timeline />
          <MotionPanel />
        </div>
      </div>
      <div className="h-[10px] shrink-0 bg-white border-b-[3px] border-[#d4d4d4]" />
      <Watermark />
    </div>
  );
}
